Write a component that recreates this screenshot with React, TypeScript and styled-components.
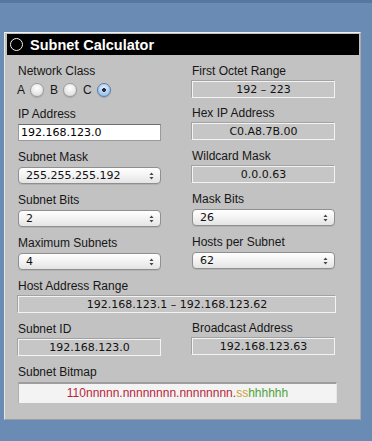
import React, { useState } from "react";
import styled, { createGlobalStyle } from "styled-components";

const GlobalStyle = createGlobalStyle`
  html, body {
    margin: 0;
    padding: 0;
  }
  body {
    background: linear-gradient(#56779e 0, #56779e 3px, #6a8bb3 3px);
    min-height: 441px;
    font-family: "Liberation Sans", Arial, sans-serif;
  }
`;

const Panel = styled.div`
  margin: 32px 0 0 4px;
  width: 357px;
  box-sizing: border-box;
  background: #c2c2c2;
  border-top: 1px solid #f2f2f2;
  border-left: 1px solid #e6e6e6;
  border-right: 1px solid #a9a9a9;
  border-bottom: 1px solid #9c9c9c;
  padding-bottom: 16px;
`;

const TitleBar = styled.div`
  margin: 1px 1px 0 2px;
  height: 21px;
  background: #000;
  display: flex;
  align-items: center;
  gap: 7px;
  padding-left: 3px;
  color: #fff;
  font-weight: bold;
  font-size: 14.5px;
`;

const Ring = styled.span`
  width: 11px;
  height: 11px;
  border: 1px solid #f4f4f4;
  border-radius: 50%;
`;

const Grid = styled.div`
  display: grid;
  grid-template-columns: 143px 143px;
  column-gap: 31px;
  row-gap: 9px;
  padding: 9px 0 0 13px;
`;

const Field = styled.div<{ $wide?: boolean; $up?: boolean }>`
  display: flex;
  flex-direction: column;
  gap: 3px;
  grid-column: ${(p) => (p.$wide ? "1 / -1" : "auto")};
  margin-top: ${(p) => (p.$up ? "-1px" : "0")};
`;

const Label = styled.label`
  font-size: 12px;
  line-height: 14px;
  color: #161616;
  white-space: nowrap;
`;

const Value = styled.div<{ $wide?: boolean }>`
  height: 17px;
  width: ${(p) => (p.$wide ? "318px" : "143px")};
  box-sizing: border-box;
  background: #c6c6c6;
  border: 1px solid #f3f3f3;
  box-shadow: -1px -1px 0 #a2a2a2;
  font-family: "DejaVu Sans", Verdana, sans-serif;
  font-size: 11px;
  line-height: 15px;
  text-align: center;
  color: #111;
`;

const TextInput = styled.input`
  height: 17px;
  width: 143px;
  box-sizing: border-box;
  margin: 0;
  padding: 0 2px;
  background: #fff;
  border: 1px solid #9a9a9a;
  border-top-color: #6e6e6e;
  font-family: "DejaVu Sans", Verdana, sans-serif;
  font-size: 11px;
  color: #000;
  outline: none;
`;

const Select = styled.div<{ $width?: number }>`
  height: 17px;
  width: ${(p) => p.$width || 143}px;
  box-sizing: border-box;
  display: flex;
  align-items: center;
  justify-content: space-between;
  padding: 0 6px 0 7px;
  background: linear-gradient(#ffffff, #f0f0f0 60%, #e4e4e4);
  border: 1px solid #8f8f8f;
  border-radius: 4px;
  box-shadow: 0 1px 0 rgba(0, 0, 0, 0.08);
  font-family: "DejaVu Sans", Verdana, sans-serif;
  font-size: 11px;
  color: #111;
`;

const Arrows = () => (
  <svg width="5" height="8" viewBox="0 0 5 8">
    <path d="M2.5 0.5 L4.5 3 L0.5 3 Z" fill="#444" />
    <path d="M2.5 7.5 L4.5 5 L0.5 5 Z" fill="#444" />
  </svg>
);

const RadioRow = styled.div`
  display: flex;
  align-items: center;
  height: 17px;
  margin-left: -1px;
  font-size: 12px;
  color: #161616;
`;

const RadioLabel = styled.label`
  display: flex;
  align-items: center;
  gap: 5px;
  margin-right: 6px;
`;

const Radio = styled.input`
  appearance: none;
  margin: 0;
  width: 14px;
  height: 14px;
  border-radius: 50%;
  border: 1px solid #9c9c9c;
  background: radial-gradient(circle at 50% 35%, #ffffff, #e2e2e2 70%, #d0d0d0);
  box-shadow: 0 1px 1px rgba(0, 0, 0, 0.15);
  &:checked {
    border-color: #5a7ca8;
    background: radial-gradient(circle, #1d2f4a 0 1.6px, transparent 2.2px),
      radial-gradient(circle at 50% 35%, #e4f0fb, #9fc4ea 70%, #79a7d8);
  }
`;

const Bitmap = styled.div`
  grid-column: 1 / -1;
  width: 319px;
  height: 21px;
  box-sizing: border-box;
  background: #f3f3f3;
  border-top: 2px solid #9e9e9e;
  border-left: 1px solid #b0b0b0;
  border-right: 1px solid #e6e6e6;
  font-size: 12px;
  line-height: 19px;
  text-align: center;
`;

const Bits = styled.span<{ $color: string }>`
  color: ${(p) => p.$color};
`;

export default function App() {
  const [cls, setCls] = useState("C");
  const [ip, setIp] = useState("192.168.123.0");

  return (
    <>
      <GlobalStyle />
      <Panel>
        <TitleBar>
          <Ring />
          Subnet Calculator
        </TitleBar>
        <Grid>
          <Field>
            <Label>Network Class</Label>
            <RadioRow>
              {["A", "B", "C"].map((c) => (
                <RadioLabel key={c}>
                  {c}
                  <Radio
                    type="radio"
                    name="cls"
                    checked={cls === c}
                    onChange={() => setCls(c)}
                  />
                </RadioLabel>
              ))}
            </RadioRow>
          </Field>
          <Field>
            <Label>First Octet Range</Label>
            <Value>192 – 223</Value>
          </Field>

          <Field>
            <Label>IP Address</Label>
            <TextInput value={ip} onChange={(e) => setIp(e.target.value)} />
          </Field>
          <Field $up>
            <Label>Hex IP Address</Label>
            <Value>C0.A8.7B.00</Value>
          </Field>

          <Field>
            <Label>Subnet Mask</Label>
            <Select>
              255.255.255.192
              <Arrows />
            </Select>
          </Field>
          <Field $up>
            <Label>Wildcard Mask</Label>
            <Value>0.0.0.63</Value>
          </Field>

          <Field>
            <Label>Subnet Bits</Label>
            <Select>
              2
              <Arrows />
            </Select>
          </Field>
          <Field $up>
            <Label>Mask Bits</Label>
            <Select>
              26
              <Arrows />
            </Select>
          </Field>

          <Field>
            <Label>Maximum Subnets</Label>
            <Select>
              4
              <Arrows />
            </Select>
          </Field>
          <Field $up>
            <Label>Hosts per Subnet</Label>
            <Select>
              62
              <Arrows />
            </Select>
          </Field>

          <Field $wide>
            <Label>Host Address Range</Label>
            <Value $wide>192.168.123.1 – 192.168.123.62</Value>
          </Field>

          <Field>
            <Label>Subnet ID</Label>
            <Value>192.168.123.0</Value>
          </Field>
          <Field $up>
            <Label>Broadcast Address</Label>
            <Value>192.168.123.63</Value>
          </Field>

          <Field $wide>
            <Label>Subnet Bitmap</Label>
            <Bitmap>
              <Bits $color="#b81f3c">110nnnnn.nnnnnnnn.nnnnnnnn.</Bits>
              <Bits $color="#cf9f3a">ss</Bits>
              <Bits $color="#4fa238">hhhhhh</Bits>
            </Bitmap>
          </Field>
        </Grid>
      </Panel>
    </>
  );
}
